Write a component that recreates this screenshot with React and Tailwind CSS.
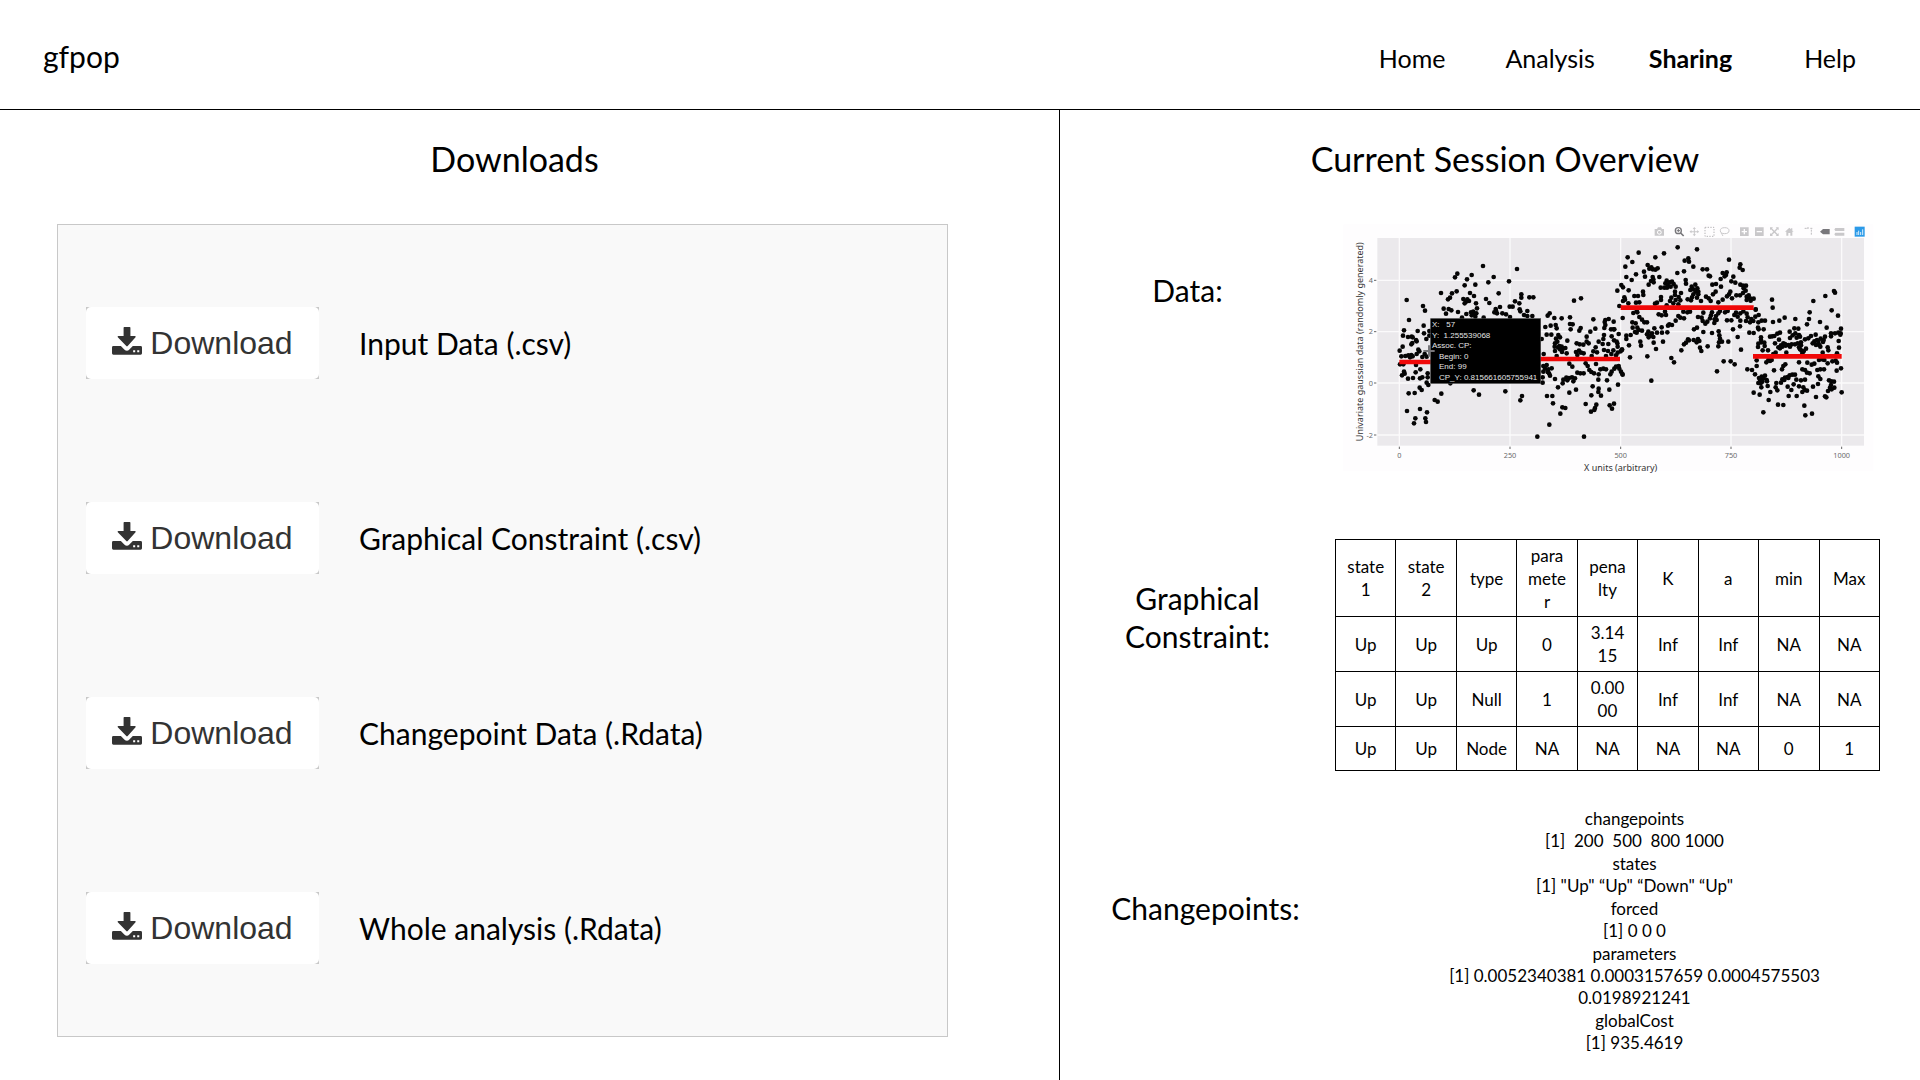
import React from "react";

// Observations of the simulated series, grouped by the stretch of the X axis they cover.
const groups = [
  {
    dx: 150,
    dy: 105,
    points:
      "279,48 381,57 202,71 195,82 245,75 231,88 311,81 295,97 357,94 224,106 256,104 153,129 186,130 200,124 240,129 326,130 252,138 180,143 174,148 220,147 237,153 228,155 224,160 232,148 258,160 288,147 298,159 394,133 394,143 375,154 388,160 418,142 430,142 330,171 317,177 359,170 368,170 161,176 176,177 184,181 168,191 204,186 229,192 243,187 250,185 259,190 261,175 313,187 321,190 337,190 348,193 389,178 391,184 412,183 402,195 427,198 216,203 245,196 256,200 281,203 360,201 412,198 318,182 248,193 50,150 99,168 105,182 57,210 101,227 42,241 83,243 39,257 54,261 65,260 68,262 102,250 109,267 80,274 67,279 78,270 64,283 118,243 118,257 38,290 29,302 34,319 46,318 55,316 64,315 68,319 85,299 88,304 80,312 97,321 104,312 110,320 60,322 30,343 40,343 78,345 36,376 44,371 42,365 91,358 54,386 69,384 77,367 90,385 97,382 113,370 113,382 110,398 115,405 89,413 95,420 56,430 74,429 181,400 154,431 134,450 143,455 251,421 267,434 346,424 396,438 391,451 51,483 90,477 111,487 76,505 72,520 106,505 108,516 442,560",
  },
  {
    dx: 570,
    dy: 225,
    points:
      "132,32 153,25 59,70 53,77 73,84 95,85 120,82 190,88 46,111 62,107 80,115 77,105 120,102 128,103 122,118 152,114 148,122 170,140 181,125 196,116 226,90 236,87 251,95 224,96 226,105 223,114 243,118 251,118 266,132 50,134 64,134 85,135 90,142 78,146 82,155 75,160 112,152 222,135 245,139 35,147 140,160 149,163 170,155 176,160 160,164 206,155 218,162 235,162 252,151 260,155 220,147 74,170 84,172 95,170 99,176 106,174 90,178 88,168 75,183 96,186 110,190 138,186 147,182 153,188 161,190 142,195 190,184 201,187 197,172 222,180 234,183 250,181 263,188 272,184 276,178 41,192 80,198 185,198 258,196 244,192 228,198 50,225 45,236 55,238 65,235 40,228 57,250 53,246 60,257 40,245 38,262 38,278 118,221 127,230 142,248 151,250 161,250 173,228 178,240 184,246 192,250 167,220 198,222 211,238 220,236 228,238 206,253 245,245 241,253 253,236 258,230 266,228 268,236 273,245 278,254 75,267 109,263 100,269 117,264 126,262 135,265 130,274 112,271 98,280 84,292 205,269 231,271 138,299 118,308 188,289 206,296 205,306 213,317 184,316 238,299 264,284 51,318 67,318 69,340 97,352 106,354 91,371 167,342 199,344 195,354 183,365 193,360 239,346 252,341 246,356 58,404 162,440",
  },
  {
    dx: 810,
    dy: 60,
    points:
      "203,37 261,43 86,53 162,55 53,67 136,67 67,81 357,74 46,95 235,70 224,77 237,80 250,95 278,103 291,103 391,88 389,98 398,105 202,114 222,109 113,90 124,97 118,101 128,103 136,104 143,100 102,110 105,125 78,118 49,126 65,135 128,126 123,138 116,149 148,126 130,133 131,142 170,137 166,145 173,150 179,142 186,140 191,147 182,155 197,155 152,158 163,158 171,158 227,135 228,146 300,124 296,122 338,114 350,112 348,120 332,132 344,124 370,125 364,139 376,143 307,149 318,147 333,155 34,150 39,157 22,167 56,166 99,170 100,180 43,187 39,198 45,194 73,183 84,183 88,202 78,203 256,149 245,155 262,160 241,165 250,163 257,170 265,170 265,178 250,178 246,187 233,193 243,196 261,188 213,174 195,180 206,186 211,196 197,195 184,188 180,198 153,186 153,195 141,203 135,206 195,170 288,185 296,190 302,198 273,198 317,170 309,178 338,194 325,202 357,178 351,184 366,190 361,170 379,181 390,181 391,149 399,152 408,152 401,160 407,167 399,174 410,185 416,181 420,190 431,191 422,197 410,195 190,205 205,208 55,205 28,213 170,211 38,249 13,283 88,246 70,234 82,232 80,228 146,238 155,241 168,240 165,230 205,243 222,250 211,248 197,257 186,270 178,268 174,272 232,232 240,230 220,230 264,246 280,233 275,248 278,258 286,266 292,260 300,250 303,241 318,243 314,253 320,255 313,264 325,235 330,228 306,232 345,232 353,228 351,256 364,256 373,240 378,233 383,245 391,257 391,235 400,229 410,236 413,247 408,258 420,262 430,258 424,252 437,223 436,245 446,240 445,262 67,262 77,265 82,278 68,278 96,254 103,262 111,262 75,291 80,293 96,287 86,285 133,280 155,277 115,290 111,298 126,295 121,302 116,307 141,293 156,293 172,292 130,306 49,302 62,300 49,312 57,331 91,320 93,332 131,323 159,320 138,342 22,325 23,335 36,345 261,278 252,283 280,291 306,294 326,289 328,301 330,311 327,322 325,334 336,320 355,320 383,306 369,283 390,274 418,293 431,294 234,313 237,316 251,315 264,312 268,318 260,322 228,323 222,328 293,334 270,338 274,348 214,346 393,344 60,367 112,364 184,369 192,382 341,379 362,379 374,388 321,409 124,437 37,417",
  },
  {
    dx: 1215,
    dy: 195,
    points:
      "81,59 83,83 205,63 241,48 267,33 270,38 260,91 279,107 194,97 192,117 186,133 225,126 245,143 151,117 119,113 103,122 84,126 32,89 50,122 60,122 41,148 56,148 48,172 39,143 105,158 97,161 88,168 75,170 82,169 134,155 148,145 160,146 151,160 143,166 162,165 155,173 165,170 135,174 102,179 90,190 49,187 58,188 59,198 40,191 39,201 53,211 69,211 48,180 198,168 190,175 212,164 216,180 208,184 220,186 227,176 236,180 203,190 213,195 223,195 234,186 258,169 258,160 270,160 280,158 288,146 287,160 286,164 281,183 282,203 276,220 240,170 248,202 250,211 233,218 226,200 180,178 168,187 158,190 168,196 162,202 170,212 183,206 176,214 165,208 150,193 140,193 130,195 122,197 115,190 112,200 105,205 100,202 108,196 135,200 120,192 124,218 92,218 85,222 172,221 75,243 64,247 70,240 80,240 35,241 35,258 7,268 21,270 30,283 87,271 121,253 115,258 111,268 187,248 162,247 200,254 208,251 222,240 232,238 248,250 262,244 272,242 276,248 238,240 217,270 226,268 237,268 275,272 288,265 180,270 172,268 186,278 194,280 220,289 226,297 50,290 42,294 60,287 65,300 66,304 55,295 45,300 52,305 47,310 40,309 49,322 68,318 112,298 120,293 128,291 134,286 142,284 150,284 118,300 130,294 108,308 94,309 92,322 97,331 154,299 168,301 180,299 146,313 162,319 128,320 139,330 219,312 204,320 175,322 179,330 172,336 186,332 252,301 259,304 267,305 258,315 268,323 255,323 249,333 260,328 290,337 26,338 44,344 71,360 76,336 131,348 155,348 99,374 115,375 213,351 240,349 244,352 178,377 55,397 181,406 201,401",
  },
];

const dots = groups.flatMap(({ dx, dy, points }) =>
  points.split(" ").map((pair) => {
    const [x, y] = pair.split(",").map(Number);
    return [x + dx, y + dy];
  })
);

const xTicks = [[178, "0"], [510, "250"], [842, "500"], [1173, "750"], [1505, "1000"]];
const yTicks = [[196, "4"], [350, "2"], [504, "0"], [660, "-2"]];
const segments = [[178, 300, 441], [590, 840, 432], [842, 1241, 278], [1239, 1505, 424]];

function ModeBar() {
  return (
    <g fill="#c9c8ca" stroke="none">
      <path fillRule="evenodd" d="M944 42h7l3-5h9l3 5h6v20h-28z M958 45a7 7 0 1 0 .1 0z" />
      <circle cx="958" cy="52" r="4" />
      <g fill="none" stroke="#77767a">
        <circle cx="1015" cy="47" r="9" strokeWidth="4" />
        <path d="M1022 54l9 9" strokeWidth="5" />
        <path d="M1010 47h10M1015 42v10" strokeWidth="3" />
      </g>
      <path d="M1063 36l5 6h-3.500v6.500h7v-3.500l6 5-6 5v-3.500h-7v6.500h3.500l-5 6-5-6h3.500v-6.500h-7v3.500l-6-5 6-5v3.500h7v-6.500h-3.500z" />
      <rect x="1095" y="37" width="27" height="27" fill="none" stroke="#b5b4b6" strokeWidth="3" strokeDasharray="4 4" />
      <g fill="none" stroke="#c9c8ca" strokeWidth="3">
        <ellipse cx="1154" cy="47" rx="13" ry="9" />
        <path d="M1145 54c-3 4 5 4 3 9" />
      </g>
      <path fillRule="evenodd" d="M1200 37h26v26h-26z M1211 42v6h-6v4h6v6h4v-6h6v-4h-6v-6z" />
      <path fillRule="evenodd" d="M1245 37h26v26h-26z M1250 48v4h16v-4z" />
      <path d="M1290 37h9l-3 3 7 7 7-7-3-3h9v9l-3-3-7 7 7 7 3-3v9h-9l3-3-7-7-7 7 3 3h-9v-9l3 3 7-7-7-7-3 3z" />
      <path d="M1335 50l13-12 5 5v-3h4v7l4 3h-4v12h-6v-8h-6v8h-6v-12z" />
      <path d="M1394 40h10M1414 44v16M1411 40h6M1404 36v8" fill="none" stroke="#bdbcbe" strokeWidth="3" strokeDasharray="6 3" />
      <path d="M1440 50l9-8h20v16h-20z" fill="#78777b" />
      <path d="M1486 39h27v9h-27l-3-4.500zM1486 53h27v9h-27l-3-4.500z" />
      <rect x="1544" y="35" width="30" height="30" fill="#2b9ae8" />
      <path d="M1551 60v-9M1556 60v-13M1562 60v-9M1568 60v-17" fill="none" stroke="#d9eefc" strokeWidth="3" />
    </g>
  );
}

function DataPlot() {
  return (
    <svg
      viewBox="-15 0 1635 780"
      className="block w-full font-['Noto_Sans',sans-serif]"
      role="img"
      aria-label="Univariate gaussian data with fitted changepoints"
    >
      <rect x="10" y="28" width="1590" height="740" fill="#fefdfe" />
      <rect x="112" y="69" width="1460" height="623" fill="#ebe9ec" />
      <g stroke="#fbfafb" strokeWidth="4">
        {xTicks.map(([x]) => <line key={x} x1={x} x2={x} y1="69" y2="692" />)}
        {yTicks.map(([y]) => <line key={y} x1="112" x2="1572" y1={y} y2={y} />)}
      </g>
      <g stroke="#666" strokeWidth="3">
        {xTicks.map(([x]) => <line key={x} x1={x} x2={x} y1="695" y2="702" />)}
        {yTicks.map(([y]) => <line key={y} x1="102" x2="109" y1={y} y2={y} />)}
      </g>
      <g fill="#6a6a6c" fontSize="22">
        {xTicks.map(([x, label]) => <text key={x} x={x} y="729" textAnchor="middle">{label}</text>)}
        {yTicks.map(([y, label]) => <text key={y} x="99" y={y + 8} textAnchor="end">{label}</text>)}
      </g>
      <g fill="#333" fontSize="27" textAnchor="middle">
        <text x="842" y="768">X units (arbitrary)</text>
        <text transform="translate(70 380) rotate(-90)">Univariate gaussian data (randomly generated)</text>
      </g>
      <g fill="#050505">
        {dots.map(([x, y], i) => <circle key={i} cx={x} cy={y} r="7" />)}
      </g>
      <g stroke="#f00808" strokeWidth="14">
        {segments.map(([x1, x2, y]) => <line key={x1} x1={x1} x2={x2} y1={y} y2={y} />)}
      </g>
      <rect x="272" y="311" width="330" height="194" fill="#000" stroke="#444" strokeWidth="2" />
      <path d="M250 408h34M267 391v34" stroke="#77767a" strokeWidth="6" />
      <g fill="#e4e4e4" fontSize="24" className="font-['Liberation_Sans',sans-serif]">
        <text x="276" y="337">{"X:\u00a0\u00a0 57"}</text>
        <text x="276" y="369">{"Y:\u00a0 1.255539068"}</text>
        <text x="276" y="400">Assoc. CP:</text>
        <text x="297" y="431">Begin: 0</text>
        <text x="297" y="463">End: 99</text>
        <text x="297" y="495">CP_Y: 0.815661605755941</text>
      </g>
      <ModeBar />
    </svg>
  );
}

function DownloadIcon() {
  return (
    <svg viewBox="0 0 88 82" className="mb-1 h-7 w-[30px]" fill="currentColor" aria-hidden="true">
      <path d="M34 2q0-2 2-2h16q2 0 2 2v24h13q4 0 2 4L46 56q-2 2-4 0L17 30q-2-4 2-4h15z" />
      <path d="M4 56h22l10 10q8 7 15 0l10-10h23q4 0 4 4v17q0 4-4 4H4q-4 0-4-4V60q0-4 4-4z" />
      <path d="M62 68h6v6h-6zM74 68h6v6h-6z" fill="#fff" />
    </svg>
  );
}

const downloads = [
  "Input Data (.csv)",
  "Graphical Constraint (.csv)",
  "Changepoint Data (.Rdata)",
  "Whole analysis (.Rdata)",
];

function DownloadRow({ id, label }) {
  return (
    <li className="flex items-center gap-10">
      <span className="bg-[#c8c8c8]">
        <button
          type="button"
          aria-describedby={id}
          className="flex h-[72px] w-[233px] items-center justify-center gap-2 rounded-[5px] bg-white font-['Liberation_Sans',sans-serif] text-[32px] text-[#333]"
        >
          <DownloadIcon />
          Download
        </button>
      </span>
      <span id={id} className="text-[30px]">{label}</span>
    </li>
  );
}

const headings = [["state", "1"], ["state", "2"], ["type"], ["para", "mete", "r"], ["pena", "lty"], ["K"], ["a"], ["min"], ["Max"]];
const rows = [
  [["Up"], ["Up"], ["Up"], ["0"], ["3.14", "15"], ["Inf"], ["Inf"], ["NA"], ["NA"]],
  [["Up"], ["Up"], ["Null"], ["1"], ["0.00", "00"], ["Inf"], ["Inf"], ["NA"], ["NA"]],
  [["Up"], ["Up"], ["Node"], ["NA"], ["NA"], ["NA"], ["NA"], ["0"], ["1"]],
];

const broken = (parts) =>
  parts.map((part, i) => (
    <React.Fragment key={i}>
      {i > 0 && <br />}
      {part}
    </React.Fragment>
  ));

function ConstraintTable() {
  return (
    <table className="w-full table-fixed border-collapse text-center text-[17px] leading-[23px]">
      <thead>
        <tr className="h-[77px]">
          {headings.map((h, i) => (
            <th key={i} scope="col" className="border border-black p-0 font-normal">{broken(h)}</th>
          ))}
        </tr>
      </thead>
      <tbody>
        {rows.map((row, r) => (
          <tr key={r} className="h-[55px] last:h-11">
            {row.map((cell, c) => (
              <td key={c} className="border border-black p-0">{broken(cell)}</td>
            ))}
          </tr>
        ))}
      </tbody>
    </table>
  );
}

const output = [
  ["changepoints", "[1]  200  500  800 1000"],
  ["states", "[1] \"Up\" “Up\" “Down\" “Up\""],
  ["forced", "[1] 0 0 0"],
  ["parameters", "[1] 0.0052340381 0.0003157659 0.0004575503\n0.0198921241"],
  ["globalCost", "[1] 935.4619"],
];

export default function App() {
  return (
    <div className="flex min-h-screen flex-col bg-white font-[Lato,sans-serif] text-black">
      <header className="flex h-[110px] items-center justify-between border-b border-black pr-16 pl-[43px]">
        <a href="#top" className="pt-1 text-[30px]">gfpop</a>
        <nav className="flex items-center pt-2 text-[25px]">
          <a href="#home" className="mr-[60px]">Home</a>
          <a href="#analysis" className="mr-[54px]">Analysis</a>
          <a href="#sharing" aria-current="page" className="mr-[72px] font-bold">Sharing</a>
          <a href="#help">Help</a>
        </nav>
      </header>

      <main className="grid grow grid-cols-[1059fr_861fr]">
        <section className="flex flex-col pt-7 pr-[111px] pb-[43px] pl-[57px]">
          <h1 className="pl-6 text-center text-[34px] leading-[42px]">Downloads</h1>
          <ul className="mt-11 flex grow flex-col justify-between border border-[#c8c8c8] bg-[#f9f9f9] pt-[82px] pb-[72px] pl-7">
            {downloads.map((label, i) => (
              <DownloadRow key={label} id={`download-${i}`} label={label} />
            ))}
          </ul>
        </section>

        <section className="border-l border-black pt-7 pr-10">
          <h1 className="pl-[70px] text-center text-[34px] leading-[42px]">Current Session Overview</h1>
          <div className="mt-[35px] grid grid-cols-[275px_1fr] text-center">
            <h2 className="pt-14 pr-5 text-[30px] leading-[38px]">Data:</h2>
            <DataPlot />

            <h2 className="pt-[104px] text-[30px] leading-[38px]">Graphical<br />Constraint:</h2>
            <div className="pt-16">
              <ConstraintTable />
            </div>

            <h2 className="pt-[118px] pl-4 text-[30px] leading-[38px]">Changepoints:</h2>
            <div className="flex flex-col gap-px pt-[37px] pl-[54px] text-[17px] leading-[22px] whitespace-pre">
              {output.map(([name, value]) => (
                <p key={name}>{name + "\n" + value}</p>
              ))}
            </div>
          </div>
        </section>
      </main>
    </div>
  );
}
